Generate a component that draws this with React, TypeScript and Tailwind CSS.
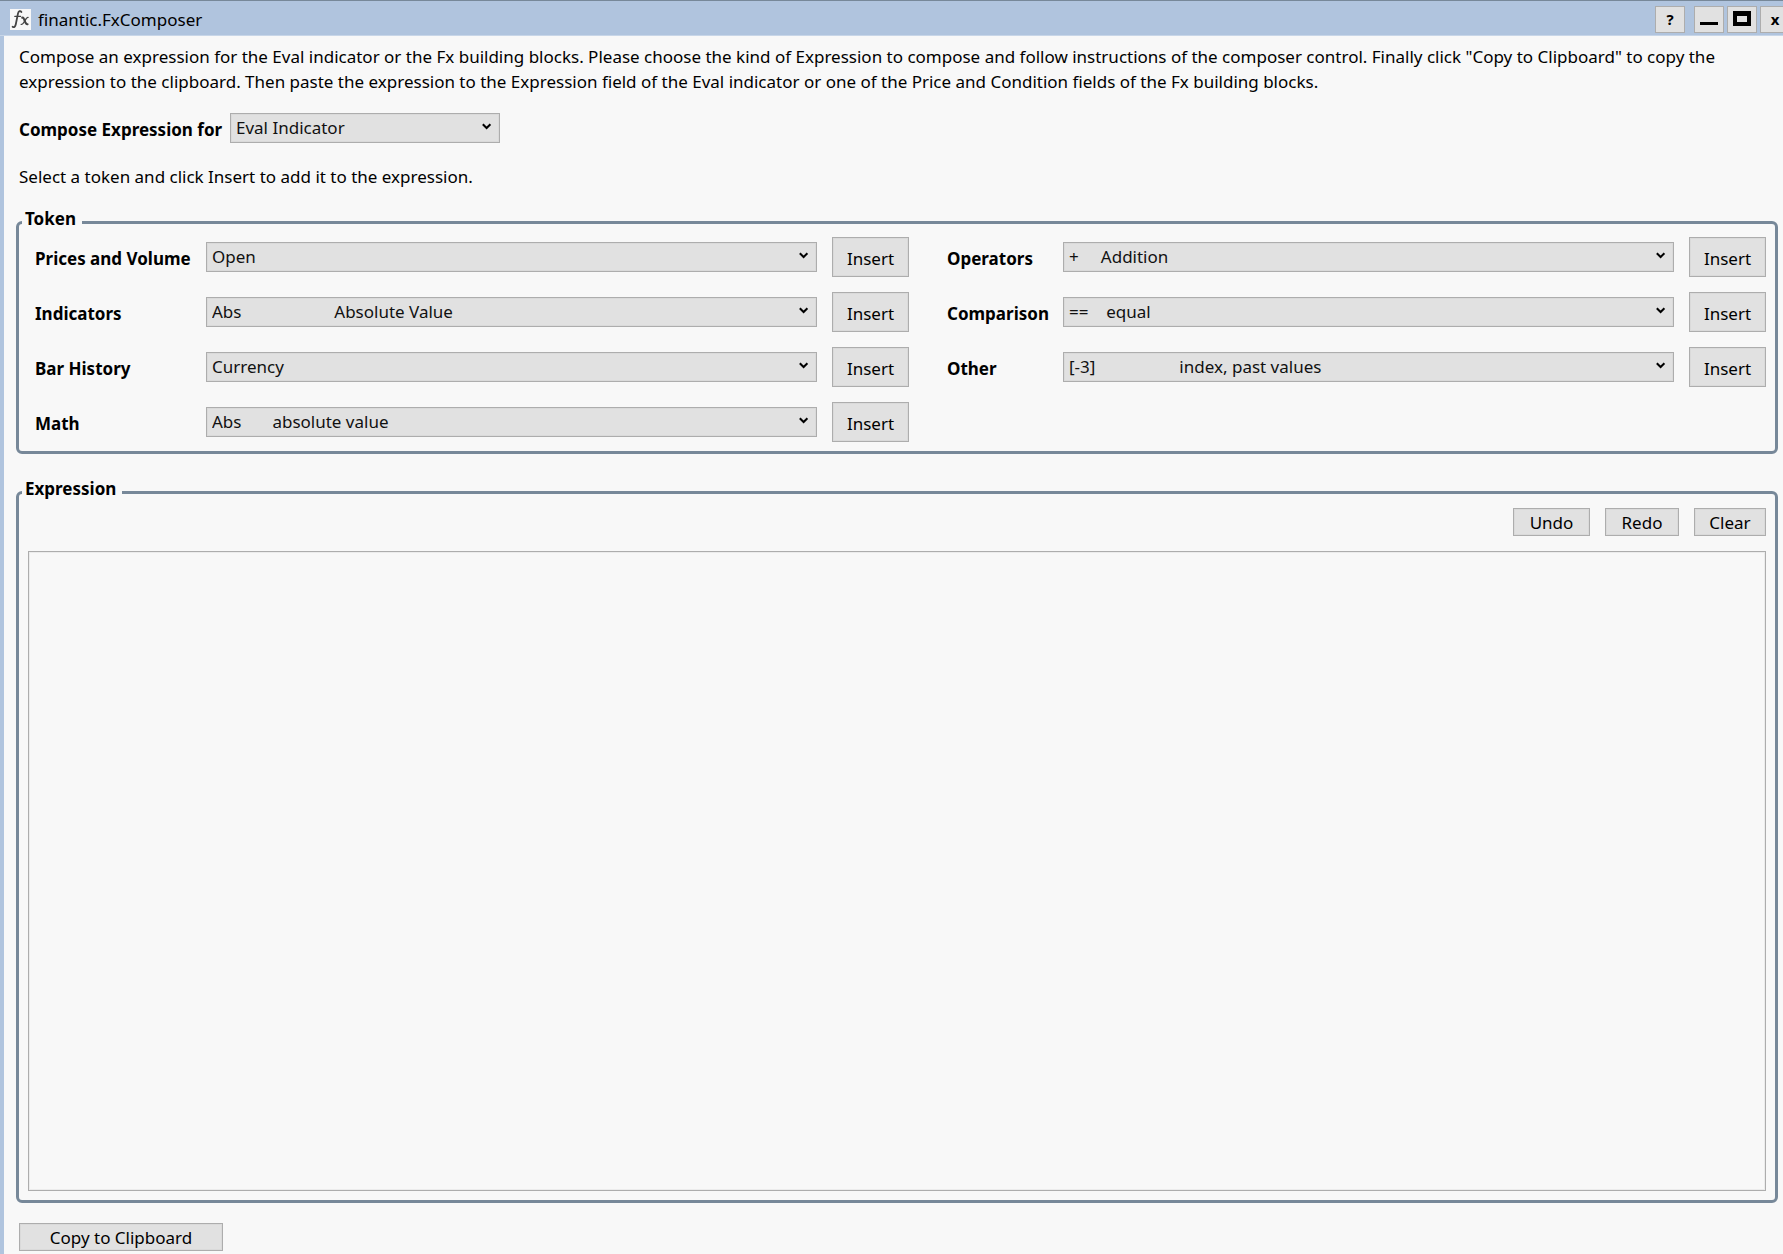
import { ReactNode } from 'react';

const nbsp = (count: number) => '\u00a0'.repeat(count);

const leftTokens = [
  { id: 'prices', label: 'Prices and Volume', value: 'Open' },
  { id: 'indicators', label: 'Indicators', value: `Abs${nbsp(21)}Absolute Value` },
  { id: 'history', label: 'Bar History', value: 'Currency' },
  { id: 'math', label: 'Math', value: `Abs${nbsp(7)}absolute value` }
];

const rightTokens = [
  { id: 'operators', label: 'Operators', value: `+${nbsp(5)}Addition` },
  { id: 'comparison', label: 'Comparison', value: `==${nbsp(4)}equal` },
  { id: 'other', label: 'Other', value: `[-3]${nbsp(19)}index, past values` }
];

interface SelectProps {
  id: string;
  value: string;
  className?: string;
}

const Select = ({ id, value, className = '' }: SelectProps) => (
  <div className={`relative ${className}`}>
    <select
      id={id}
      className="block h-[30px] w-full appearance-none border border-[#adadad] bg-[#e1e1e1] pr-7 pb-[2px] pl-[5px] text-[17px] text-[#111] shadow-[inset_0_0_0_1px_#dadada]"
    >
      <option>{value}</option>
    </select>
    <svg
      className="pointer-events-none absolute top-[10px] right-[8px]"
      width="10"
      height="8"
      viewBox="0 0 10 8"
      fill="none"
      stroke="#000"
      strokeWidth="2"
    >
      <path d="M0.8 1.2L4.6 5L8.4 1.2" />
    </svg>
  </div>
);

interface ButtonProps {
  children: ReactNode;
  className?: string;
}

const Button = ({ children, className = '' }: ButtonProps) => (
  <button
    type="button"
    className={`shrink-0 border border-[#adadad] bg-[#e1e1e1] text-[17px] leading-[24px] text-black shadow-[inset_0_0_0_1px_#dadada] ${className}`}
  >
    {children}
  </button>
);

interface TokenListProps {
  tokens: { id: string; label: string; value: string }[];
  className: string;
  labelWidth: string;
}

const TokenList = ({ tokens, className, labelWidth }: TokenListProps) => (
  <div className={`flex grow flex-col gap-[15px] ${className}`}>
    {tokens.map((token) => (
      <div key={token.id} className="flex items-center">
        <label
          htmlFor={token.id}
          className={`shrink-0 pt-[3px] font-bold whitespace-nowrap ${labelWidth}`}
        >
          {token.label}
        </label>
        <Select id={token.id} value={token.value} className="min-w-0 flex-1" />
        <Button className="ml-[15px] h-[40px] w-[77px] pt-[3px]">Insert</Button>
      </div>
    ))}
  </div>
);

const legendStyle =
  'ml-[3px] h-[27px] pr-[6px] pl-[3px] font-bold leading-[19px]';

const windowButton =
  'flex h-[27px] w-[30px] shrink-0 items-center justify-center border border-[#adadad] bg-[#e1e1e1] text-[15px] font-bold leading-[24px]';

const TitleBar = () => (
  <header className="-mr-[7px] flex h-[36px] items-center border-t border-b border-t-[#778899] border-b-[#c8d6e8] bg-[#b0c4de] pt-[2px] pl-[10px]">
    <svg width="21" height="21" viewBox="0 0 21 21" aria-hidden="true">
      <rect width="21" height="21" fill="#f8f8f8" />
      <g fill="none" stroke="#444" strokeLinecap="round">
        <path
          strokeWidth="1.8"
          d="M11.4 3C10.4 1.4 8.6 2 8 4.4L5.8 15.2C5.3 17.6 4.2 18.8 2.6 17.8"
        />
        <path strokeWidth="1.2" d="M4.8 7.4H10.6" />
        <path strokeWidth="2" d="M12.2 8.6C14.4 7.2 14.6 16 17.6 15.2" />
        <path strokeWidth="1.4" d="M18 8.4C15.6 8 14 16 11.2 15.4" />
      </g>
    </svg>
    <h1 className="flex-1 pl-[7px] text-[17px]">finantic.FxComposer</h1>
    <button type="button" aria-label="Help" className={`mr-[9px] ${windowButton}`}>
      ?
    </button>
    <div className="flex gap-[3px]">
      <button type="button" aria-label="Minimize" className={windowButton}>
        <svg width="18" height="16" viewBox="0 0 18 16">
          <path d="M0 11H18V14H0Z" />
        </svg>
      </button>
      <button type="button" aria-label="Maximize" className={windowButton}>
        <svg width="18" height="16" viewBox="0 0 18 16">
          <path fillRule="evenodd" d="M0 0H18V15H0ZM4 5V11H14V5Z" />
        </svg>
      </button>
      <button type="button" aria-label="Close" className={windowButton}>
        x
      </button>
    </div>
  </header>
);

const App = () => {
  return (
    <div className="flex min-h-screen flex-col overflow-hidden bg-[#f8f8f8] font-['Noto_Sans',sans-serif] text-[17px] leading-[25px] text-black">
      <TitleBar />
      <main className="flex flex-1 flex-col items-stretch border-l-4 border-[#b0c4de] pr-[5px] pb-[3px] pl-[12px]">
        <p className="pt-[8px] pr-[40px] pl-[3px]">
          Compose an expression for the Eval indicator or the Fx building
          blocks. Please choose the kind of Expression to compose and follow
          instructions of the composer control. Finally click "Copy to
          Clipboard" to copy the expression to the clipboard. Then paste the
          expression to the Expression field of the Eval indicator or one of the
          Price and Condition fields of the Fx building blocks.
        </p>
        <div className="mt-[19px] flex items-center pl-[3px]">
          <label
            htmlFor="target"
            className="w-[211px] pt-[3px] font-bold whitespace-nowrap"
          >
            Compose Expression for
          </label>
          <Select id="target" value="Eval Indicator" className="w-[270px]" />
        </div>
        <p className="mt-[21px] pl-[3px]">
          Select a token and click Insert to add it to the expression.
        </p>

        <fieldset className="mt-[20px] rounded-[6px] border-[3px] border-[#778899]">
          <legend className={legendStyle}>Token</legend>
          {/* basis = fixed label + button width, so all selects grow equally */}
          <div className="flex gap-[38px] pt-px pr-[9px] pb-[9px] pl-[16px]">
            <TokenList
              tokens={leftTokens}
              className="basis-[263px]"
              labelWidth="w-[171px]"
            />
            <TokenList
              tokens={rightTokens}
              className="basis-[208px]"
              labelWidth="w-[116px]"
            />
          </div>
        </fieldset>

        <fieldset className="mt-[25px] rounded-[6px] border-[3px] border-[#778899]">
          <legend className={legendStyle}>Expression</legend>
          <div className="px-[9px] pt-[2px] pb-[9px]">
            <div className="flex justify-end gap-[15px]">
              <Button className="h-[28px] w-[77px] pt-px">Undo</Button>
              <Button className="h-[28px] w-[74px] pt-px">Redo</Button>
              <Button className="h-[28px] w-[72px] pt-px">Clear</Button>
            </div>
            <textarea
              aria-label="Expression"
              className="mt-[15px] block h-[calc(100vh-614px)] min-h-[120px] w-full resize-none border border-[#adadad] bg-[#f8f8f8] p-1 shadow-[inset_0_0_0_1px_#ececec]"
            />
          </div>
        </fieldset>

        <Button className="mt-[20px] ml-[3px] h-[28px] w-[204px] pt-px">
          Copy to Clipboard
        </Button>
      </main>
    </div>
  );
};

export default App;
